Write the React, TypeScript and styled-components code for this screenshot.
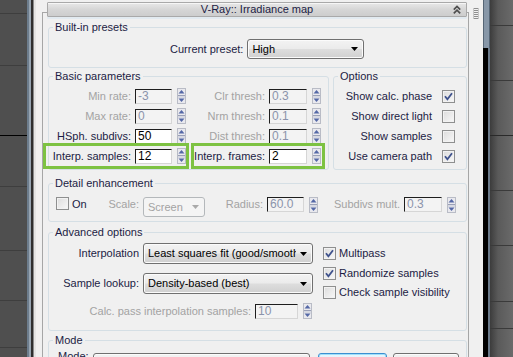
import React from "react";
import styled, { createGlobalStyle } from "styled-components";

const C = {
  text: "#1c1c44",
  dis: "#a3a3a3",
  valDis: "#8b93ab",
  panel: "#f0f0f0",
  group: "#d5dfe5",
};

const GlobalStyle = createGlobalStyle`
  html, body { margin: 0; padding: 0; background: #4b4b4b; }
  body { font-family: "Liberation Sans", Arial, sans-serif; font-size: 11px; }
  * { box-sizing: border-box; }
`;

const Screen = styled.div`
  display: flex;
  width: 513px;
  height: 357px;
  overflow: hidden;
`;

const lineStops = (lines: { y: number; c: string }[]) =>
  "linear-gradient(to bottom, " +
  lines
    .map((l) => `transparent ${l.y}px, ${l.c} ${l.y}px, ${l.c} ${l.y + 1}px, transparent ${l.y + 1}px`)
    .join(", ") +
  ")";

const Viewport = styled.div<{ $w: number; $base: string; $lines: string }>`
  flex: none;
  width: ${(p) => p.$w}px;
  background: ${(p) => p.$lines}, ${(p) => p.$base};
`;

const LeftEdge = styled.div`
  flex: none;
  width: 9px;
  background: linear-gradient(
    to right,
    #6d7d8d 0 2px,
    #97a4b1 2px 4px,
    #2e2e2e 4px 6px,
    #8a8a8a 6px 7px,
    #e4e4e4 7px 9px
  );
`;

const Panel = styled.div`
  flex: none;
  width: 447px;
  background: ${C.panel};
  display: flex;
  align-items: stretch;
`;

const Rollout = styled.div`
  flex: none;
  width: 427px;
  margin: 12px 0 0 6px;
  border: 1px solid #a6a6a6;
  border-bottom: none;
  display: flex;
  flex-direction: column;
`;

const Header = styled.div`
  height: 15px;
  margin: -11px 1px 4px 4px;
  border: 1px solid #a9a9a9;
  border-radius: 1px;
  background: linear-gradient(#e8e8e8, #d6d6d6 50%, #cdcdcd);
  box-shadow: inset 0 1px 0 #f6f6f6, 0 2px 0 #e2eaf0;
  display: grid;
  grid-template-columns: 1fr auto 1fr;
  align-items: center;
  color: ${C.text};
  line-height: 13px;
`;

const HeaderTitle = styled.span`
  grid-column: 2;
  white-space: nowrap;
`;

const HeaderIcon = styled.span`
  grid-column: 3;
  justify-self: end;
  padding-right: 5px;
  display: flex;
`;

const ScrollTrack = styled.div`
  flex: 1;
  display: flex;
  justify-content: center;
  padding-top: 8px;
`;

const RightEdge = styled.div`
  flex: none;
  width: 7px;
  background: linear-gradient(to right, #000 0 5px, #6b7a8a 5px 7px) 0 48px / 100% 100% no-repeat,
    linear-gradient(to right, #556575 0 1px, #8797a8 1px 6px, #556575 6px 7px);
`;

const Group = styled.fieldset<{ $mt?: number; $pt?: number; $pb?: number; $grow?: boolean }>`
  margin: ${(p) => p.$mt ?? 0}px 0 0 0;
  padding: ${(p) => p.$pt ?? 4}px 0 ${(p) => p.$pb ?? 4}px 0;
  border: 1px solid ${C.group};
  border-radius: 3px;
  min-width: 0;
  ${(p) => (p.$grow ? "flex: 1;" : "")}
`;

const Legend = styled.legend`
  margin-left: 4px;
  padding: 0 2px;
  line-height: 13px;
  color: ${C.text};
`;

const GroupStack = styled.div`
  display: flex;
  flex-direction: column;
  margin: 0 1px 0 5px;
`;

const SplitRow = styled.div`
  display: flex;
  gap: 4px;
  margin-top: 2px;
`;

const Label = styled.span<{ $w?: number; $dis?: boolean; $left?: boolean; $pl?: number }>`
  ${(p) => (p.$w ? `width: ${p.$w}px; flex: none;` : "")}
  text-align: ${(p) => (p.$left ? "left" : "right")};
  white-space: nowrap;
  color: ${(p) => (p.$dis ? C.dis : C.text)};
  line-height: 13px;
  ${(p) => (p.$pl ? `padding-left: ${p.$pl}px;` : "")}
`;

const NumBox = styled.div<{ $w: number; $dis?: boolean }>`
  flex: none;
  width: ${(p) => p.$w}px;
  height: 15px;
  margin-left: 4px;
  border: 1px solid;
  border-color: #1e1e1e #d6d6d6 #d6d6d6 #1e1e1e;
  background: ${(p) => (p.$dis ? "#f3f3f3" : "#fff")};
  color: ${(p) => (p.$dis ? C.valDis : "#000")};
  font-size: 12px;
  line-height: 13px;
  padding-left: 2px;
  white-space: nowrap;
  overflow: hidden;
`;

const SpinWrap = styled.span`
  flex: none;
  display: flex;
  margin-left: 5px;
`;

const Spinner = () => (
  <SpinWrap>
    <svg width="9" height="16" viewBox="0 0 9 16">
      <rect x="0.5" y="0.5" width="8" height="15" fill="#e9e9ee" stroke="#b9bcc6" />
      <path d="M4.5 2 L7.5 5.5 L1.5 5.5 Z" fill="#5468a6" />
      <rect x="1" y="7" width="7" height="1" fill="#9aa0b8" />
      <rect x="1" y="8.5" width="7" height="1" fill="#c6c9d6" />
      <path d="M1.5 10.5 L7.5 10.5 L4.5 14 Z" fill="#5468a6" />
    </svg>
  </SpinWrap>
);

const Combo = styled.div<{ $w: number; $h: number; $dis?: boolean }>`
  flex: none;
  width: ${(p) => p.$w}px;
  height: ${(p) => p.$h}px;
  margin-left: 4px;
  display: flex;
  align-items: center;
  padding: 0 5px 0 4px;
  border: 1px solid ${(p) => (p.$dis ? "#b4b8bb" : "#707070")};
  border-radius: 3px;
  background: ${(p) =>
    p.$dis ? "#f4f4f4" : "linear-gradient(#f3f3f3, #ebebeb 48%, #dddddd 52%, #d0d0d0)"};
  box-shadow: ${(p) => (p.$dis ? "none" : "inset 0 0 0 1px #fbfbfb")};
  color: ${(p) => (p.$dis ? C.dis : "#000")};
  line-height: 13px;
`;

const ComboText = styled.span`
  flex: 1;
  overflow: hidden;
  white-space: nowrap;
`;

const ComboArrow = ({ dis }: { dis?: boolean }) => (
  <svg width="7" height="4" viewBox="0 0 7 4" style={{ marginLeft: 4, flex: "none" }}>
    <path d="M0 0 H7 L3.5 4 Z" fill={dis ? "#a9a9a9" : "#000"} />
  </svg>
);

const Box = styled.span`
  flex: none;
  width: 13px;
  height: 13px;
  border: 1px solid #8e8f8f;
  background: linear-gradient(135deg, #dcdcdc, #f8f8f8);
  box-shadow: inset 0 0 0 1px #f2f2f2;
  display: flex;
  align-items: center;
  justify-content: center;
`;

const CheckBox = ({ on }: { on?: boolean }) => (
  <Box>
    {on && (
      <svg width="9" height="9" viewBox="0 0 9 9">
        <path d="M1 4.3 L3.4 7.3 L8 1.2" fill="none" stroke="#3f528c" strokeWidth="1.8" />
      </svg>
    )}
  </Box>
);

/* Built-in presets */
const PresetRow = styled.div`
  display: flex;
  align-items: center;
  margin-left: 121px;
`;

/* Basic parameters */
const BasicRows = styled.div`
  display: flex;
  flex-direction: column;
  margin-left: -3px;
`;

const BasicRow = styled.div`
  display: flex;
  gap: 8px;
`;

const Cell = styled.div<{ $hl?: boolean; $pr?: number }>`
  display: flex;
  align-items: center;
  height: 20px;
  padding-right: ${(p) => p.$pr ?? 0}px;
  ${(p) => (p.$hl ? "outline: 3px solid #7dc242;" : "")}
`;

/* Options */
const OptRow = styled.div`
  display: flex;
  align-items: center;
  justify-content: flex-end;
  gap: 10px;
  height: 20px;
  padding-right: 11px;
`;

/* Detail enhancement */
const DetailRow = styled.div`
  display: flex;
  align-items: flex-start;
  padding-left: 7px;
  & > ${Label} {
    line-height: 15px;
  }
`;

/* Advanced */
const AdvBody = styled.div`
  display: flex;
  align-items: flex-start;
`;

const AdvLeft = styled.div`
  flex: none;
  width: 264px;
  display: flex;
  flex-direction: column;
  gap: 9px;
`;

const AdvRow = styled.div`
  display: flex;
  align-items: center;
`;

const CalcRow = styled.div`
  display: flex;
  align-items: center;
  justify-content: flex-end;
  padding-right: 1px;
`;

const AdvRight = styled.div`
  margin-left: 10px;
  padding-top: 4px;
  display: flex;
  flex-direction: column;
  gap: 6.5px;
`;

const CheckItem = styled.div`
  display: flex;
  align-items: center;
  gap: 3px;
`;

/* Mode */
const ModeRow = styled.div`
  display: flex;
  align-items: flex-start;
  & > ${Label} {
    margin-top: -3px;
  }
`;

const Button = styled.div<{ $w: number; $ml: number; $focus?: boolean }>`
  flex: none;
  width: ${(p) => p.$w}px;
  height: 22px;
  margin-left: ${(p) => p.$ml}px;
  border: 1px solid ${(p) => (p.$focus ? "#3c8fd0" : "#707070")};
  border-radius: 3px;
  background: ${(p) =>
    p.$focus
      ? "linear-gradient(#eaf6fd, #d9f0fc 50%, #bee6fd 52%, #a7d9f5)"
      : "linear-gradient(#f2f2f2, #ebebeb 48%, #dddddd 52%, #cfcfcf)"};
  box-shadow: inset 0 0 0 1px ${(p) => (p.$focus ? "#9fe0fc" : "#fbfbfb")};
`;

const ChevronUp = () => (
  <svg width="8" height="9" viewBox="0 0 8 9">
    <path d="M0.8 4.6 L4 1.4 L7.2 4.6 M0.8 8.4 L4 5.2 L7.2 8.4" fill="none" stroke="#4e4e4e" strokeWidth="1.7" />
  </svg>
);

const Grip = () => (
  <svg width="6" height="11" viewBox="0 0 6 11">
    <rect x="0" y="0" width="1" height="11" fill="#c6c6c6" />
    <rect x="5" y="0" width="1" height="11" fill="#c6c6c6" />
    {[0, 2, 4, 6, 8, 10].map((y) => (
      <rect key={y} x="1" y={y} width="4" height="1" fill="#8e8e8e" />
    ))}
  </svg>
);

const leftLines = lineStops([
  { y: 13, c: "#3e3e3e" },
  { y: 65, c: "#3e3e3e" },
  { y: 135, c: "#000" },
  { y: 186, c: "#3e3e3e" },
  { y: 250, c: "#3e3e3e" },
  { y: 300, c: "#3e3e3e" },
  { y: 347, c: "#3e3e3e" },
]);

const rightLines = lineStops([
  { y: 25, c: "#3a3a3a" },
  { y: 80, c: "#3a3a3a" },
  { y: 135, c: "#2a2a2a" },
  { y: 190, c: "#3a3a3a" },
  { y: 245, c: "#3a3a3a" },
  { y: 301, c: "#3a3a3a" },
  { y: 328, c: "#3a3a3a" },
]);

export default function App() {
  return (
    <>
      <GlobalStyle />
      <Screen>
        <Viewport $w={27} $base="#4f4f4f" $lines={leftLines} />
        <LeftEdge />
        <Panel>
          <Rollout>
            <Header>
              <HeaderTitle>V-Ray:: Irradiance map</HeaderTitle>
              <HeaderIcon>
                <ChevronUp />
              </HeaderIcon>
            </Header>
            <GroupStack>
              <Group $pt={5} $pb={8}>
                <Legend>Built-in presets</Legend>
                <PresetRow>
                  <Label>Current preset:</Label>
                  <Combo $w={117} $h={20}>
                    <ComboText>High</ComboText>
                    <ComboArrow />
                  </Combo>
                </PresetRow>
              </Group>

              <SplitRow>
                <Group $pt={3} $pb={3} $grow>
                  <Legend>Basic parameters</Legend>
                  <BasicRows>
                    <BasicRow>
                      <Cell>
                        <Label $w={85} $dis>Min rate:</Label>
                        <NumBox $w={37} $dis>-3</NumBox>
                        <Spinner />
                      </Cell>
                      <Cell $pr={1}>
                        <Label $w={71} $dis>Clr thresh:</Label>
                        <NumBox $w={38} $dis>0.3</NumBox>
                        <Spinner />
                      </Cell>
                    </BasicRow>
                    <BasicRow>
                      <Cell>
                        <Label $w={85} $dis>Max rate:</Label>
                        <NumBox $w={37} $dis>0</NumBox>
                        <Spinner />
                      </Cell>
                      <Cell $pr={1}>
                        <Label $w={71} $dis>Nrm thresh:</Label>
                        <NumBox $w={38} $dis>0.1</NumBox>
                        <Spinner />
                      </Cell>
                    </BasicRow>
                    <BasicRow>
                      <Cell>
                        <Label $w={85}>HSph. subdivs:</Label>
                        <NumBox $w={37}>50</NumBox>
                        <Spinner />
                      </Cell>
                      <Cell $pr={1}>
                        <Label $w={71} $dis>Dist thresh:</Label>
                        <NumBox $w={38} $dis>0.1</NumBox>
                        <Spinner />
                      </Cell>
                    </BasicRow>
                    <BasicRow>
                      <Cell $hl>
                        <Label $w={85}>Interp. samples:</Label>
                        <NumBox $w={37}>12</NumBox>
                        <Spinner />
                      </Cell>
                      <Cell $hl $pr={1}>
                        <Label $w={71}>Interp. frames:</Label>
                        <NumBox $w={38}>2</NumBox>
                        <Spinner />
                      </Cell>
                    </BasicRow>
                  </BasicRows>
                </Group>
                <Group $pt={3} $pb={3} style={{ width: 134, flex: "none" }}>
                  <Legend>Options</Legend>
                  <OptRow>
                    <Label>Show calc. phase</Label>
                    <CheckBox on />
                  </OptRow>
                  <OptRow>
                    <Label>Show direct light</Label>
                    <CheckBox />
                  </OptRow>
                  <OptRow>
                    <Label>Show samples</Label>
                    <CheckBox />
                  </OptRow>
                  <OptRow>
                    <Label>Use camera path</Label>
                    <CheckBox on />
                  </OptRow>
                </Group>
              </SplitRow>

              <Group $mt={7} $pt={7} $pb={4}>
                <Legend>Detail enhancement</Legend>
                <DetailRow>
                  <CheckBox />
                  <Label $w={20} $left style={{ marginLeft: 3 }}>
                    On
                  </Label>
                  <Label $w={47} $dis>Scale:</Label>
                  <Combo $w={62} $h={20} $dis>
                    <ComboText>Screen</ComboText>
                    <ComboArrow dis />
                  </Combo>
                  <Label $w={58} $dis>Radius:</Label>
                  <NumBox $w={37} $dis>60.0</NumBox>
                  <Spinner />
                  <Label $w={82} $dis>Subdivs mult.</Label>
                  <NumBox $w={38} $dis>0.3</NumBox>
                  <Spinner />
                </DetailRow>
              </Group>

              <Group $mt={4} $pt={4} $pb={11}>
                <Legend>Advanced options</Legend>
                <AdvBody>
                  <AdvLeft>
                    <AdvRow>
                      <Label $w={90}>Interpolation</Label>
                      <Combo $w={170} $h={21}>
                        <ComboText>Least squares fit (good/smooth)</ComboText>
                        <ComboArrow />
                      </Combo>
                    </AdvRow>
                    <AdvRow>
                      <Label $w={90}>Sample lookup:</Label>
                      <Combo $w={170} $h={21}>
                        <ComboText>Density-based (best)</ComboText>
                        <ComboArrow />
                      </Combo>
                    </AdvRow>
                    <CalcRow>
                      <Label $dis>Calc. pass interpolation samples:</Label>
                      <NumBox $w={43} $dis>10</NumBox>
                      <Spinner />
                    </CalcRow>
                  </AdvLeft>
                  <AdvRight>
                    <CheckItem>
                      <CheckBox on />
                      <Label $left>Multipass</Label>
                    </CheckItem>
                    <CheckItem>
                      <CheckBox on />
                      <Label $left>Randomize samples</Label>
                    </CheckItem>
                    <CheckItem>
                      <CheckBox />
                      <Label $left>Check sample visibility</Label>
                    </CheckItem>
                  </AdvRight>
                </AdvBody>
              </Group>

              <Group $mt={3} $pt={6} $pb={4}>
                <Legend>Mode</Legend>
                <ModeRow>
                  <Label $w={40} $left $pl={9}>
                    Mode:
                  </Label>
                  <Combo $w={217} $h={22} />
                  <Button $w={69} $ml={8} $focus />
                  <Button $w={66} $ml={6} />
                </ModeRow>
              </Group>
            </GroupStack>
          </Rollout>
          <ScrollTrack>
            <Grip />
          </ScrollTrack>
        </Panel>
        <RightEdge />
        <Viewport
          $w={23}
          $base="linear-gradient(to right, #3c3c3c, #5a5a5a 35%, #6a6a6a)"
          $lines={rightLines}
        />
      </Screen>
    </>
  );
}
